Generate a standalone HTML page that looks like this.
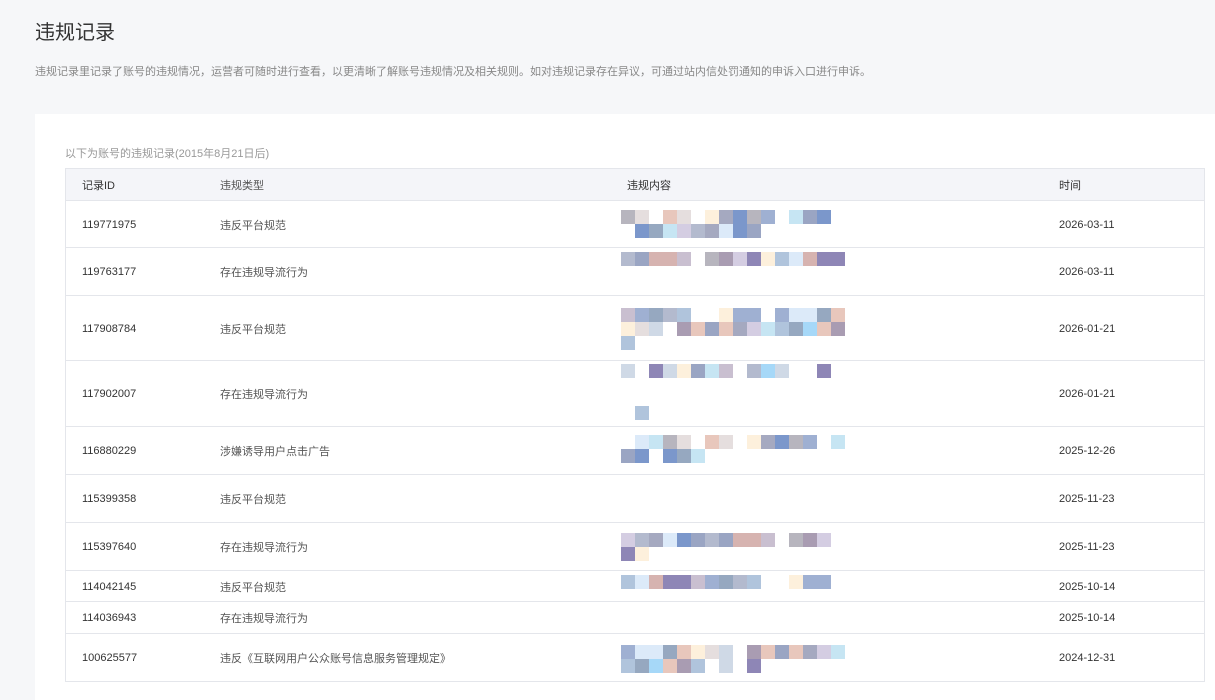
<!DOCTYPE html>
<html><head><meta charset="utf-8"><style>
body{margin:0;width:1215px;height:700px;overflow:hidden;background:#f6f7f9;font-family:"Liberation Sans","Noto Sans CJK SC",sans-serif;position:relative}
.t{position:absolute;left:35px;top:16px;font-size:20px;color:#333}
.d{position:absolute;left:35px;top:63px;font-size:11px;color:#888}
.p{position:absolute;left:35px;top:114px;right:0;bottom:0;background:#fff}
.c{position:absolute;left:65px;top:145px;font-size:11px;color:#999}
table{position:absolute;left:65px;top:168px;width:1140px;border-collapse:collapse;font-size:11px;color:#333;border:1px solid #e4e6eb;table-layout:fixed}
th{background:#f4f5f9;font-weight:normal;text-align:left;height:31px;padding:0;border-bottom:1px solid #e4e6eb}
td{padding:0;padding-top:1px;border-bottom:1px solid #e4e6eb}
th:first-child,td:first-child{padding-left:16px;width:138px}
td:nth-child(2),th:nth-child(2){width:407px;color:#555}
th:nth-child(3){width:432px}
.b{position:absolute;width:14px;height:14px}
</style></head><body>
<div class="t">违规记录</div>
<div class="d">违规记录里记录了账号的违规情况，运营者可随时进行查看，以更清晰了解账号违规情况及相关规则。如对违规记录存在异议，可通过站内信处罚通知的申诉入口进行申诉。</div>
<div class="p"></div>
<div class="c">以下为账号的违规记录(2015年8月21日后)</div>
<table>
<tr><th>记录ID</th><th>违规类型</th><th>违规内容</th><th>时间</th></tr>
<tr style="height:47px"><td>119771975</td><td>违反平台规范</td><td></td><td>2026-03-11</td></tr>
<tr style="height:48px"><td>119763177</td><td>存在违规导流行为</td><td></td><td>2026-03-11</td></tr>
<tr style="height:65px"><td>117908784</td><td>违反平台规范</td><td></td><td>2026-01-21</td></tr>
<tr style="height:66px"><td>117902007</td><td>存在违规导流行为</td><td></td><td>2026-01-21</td></tr>
<tr style="height:48px"><td>116880229</td><td>涉嫌诱导用户点击广告</td><td></td><td>2025-12-26</td></tr>
<tr style="height:48px"><td>115399358</td><td>违反平台规范</td><td></td><td>2025-11-23</td></tr>
<tr style="height:48px"><td>115397640</td><td>存在违规导流行为</td><td></td><td>2025-11-23</td></tr>
<tr style="height:31px"><td>114042145</td><td>违反平台规范</td><td></td><td>2025-10-14</td></tr>
<tr style="height:32px"><td>114036943</td><td>存在违规导流行为</td><td></td><td>2025-10-14</td></tr>
<tr style="height:48px"><td>100625577</td><td>违反《互联网用户公众账号信息服务管理规定》</td><td></td><td>2024-12-31</td></tr>
</table>
<div id="m"></div>
<script>
var rows=[[210,15],[224,10],[252,16],[308,16],[322,16],[336,2],[364,16],[406,2],[435,16],[449,6],[533,15],[547,2],[575,16],[645,16],[659,10]];
var cols=["#c9bfd0","#9fb0d2","#b3bace","#e8c7bc","#d4cde2","#9aa5c3","#a99cb2","#c6e5f3","#7b97cb","#b0c4dc","#e5dede","#8e86b6","#d6b3b0","#dceaf9","#a5a9c0","#fdf0dc","#b7b5be","#96a8c0","#a6d8f8","#cfd9e6"];
var h="",s=7;
rows.forEach(function(r){for(var i=0;i<r[1];i++){s=(s*37+11)%97;if(s%6==0)continue;h+='<div class="b" style="left:'+(621+i*14)+'px;top:'+r[0]+'px;background:'+cols[s%cols.length]+'"></div>';}});
document.getElementById("m").innerHTML=h;
</script>
</body></html>
